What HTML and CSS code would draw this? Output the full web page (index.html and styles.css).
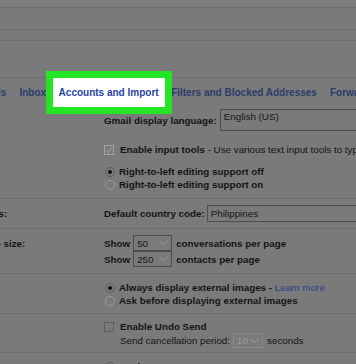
FILE: index.html
```html
<!DOCTYPE html>
<html lang="en">
<head>
    <meta charset="UTF-8">
    <meta name="viewport" content="width=device-width, initial-scale=1.0">
    <title>Gmail - Settings</title>
    <link rel="stylesheet" href="styles.css">
</head>
<body>
    <div class="masthead">
        <div class="band band-a"></div>
        <div class="band band-b"></div>
        <div class="band band-c"></div>
        <div class="band band-d"></div>
    </div>

    <nav class="tabs">
        <span class="tab">General</span>
        <span class="tab">Labels</span>
        <span class="tab">Inbox</span>
        <span class="tab tab-active">Accounts and Import</span>
        <span class="tab">Filters and Blocked Addresses</span>
        <span class="tab">Forwarding and POP/IMAP</span>
    </nav>

    <div class="settings">
        <!-- Language -->
        <div class="row row-language">
            <div class="label">Language:</div>
            <div class="value">
                <div class="line line-lang">
                    Gmail display language:
                    <span class="select select-lang plain">English (US)</span>
                </div>
                <div class="line line-input">
                    <span class="check check-on">
                        <svg width="8" height="8" viewBox="0 0 8 8"><polyline points="1,4 3,6.5 7,1" /></svg>
                    </span>
                    Enable input tools&nbsp;<span class="plain">- Use various text input tools to type in the language of your choice</span>
                </div>
                <div class="options">
                    <div class="line"><span class="radio radio-on"></span>Right-to-left editing support off</div>
                    <div class="line"><span class="radio"></span>Right-to-left editing support on</div>
                </div>
            </div>
        </div>

        <!-- Phone numbers -->
        <div class="row row-phone">
            <div class="label">Phone numbers:</div>
            <div class="value">
                <div class="line line-country">
                    Default country code:
                    <span class="select select-country plain">Philippines</span>
                </div>
            </div>
        </div>

        <!-- Page size -->
        <div class="row row-size">
            <div class="label">Maximum page size:</div>
            <div class="value">
                <div class="line line-show">
                    Show
                    <span class="select select-small plain">50
                        <svg class="chevron" width="9" height="6" viewBox="0 0 9 6"><polyline points="0.5,0.5 4.5,5 8.5,0.5" /></svg>
                    </span>
                    conversations per page
                </div>
                <div class="line line-show">
                    Show
                    <span class="select select-small plain">250
                        <svg class="chevron" width="9" height="6" viewBox="0 0 9 6"><polyline points="0.5,0.5 4.5,5 8.5,0.5" /></svg>
                    </span>
                    contacts per page
                </div>
            </div>
        </div>

        <!-- Images -->
        <div class="row row-images">
            <div class="label">Images:</div>
            <div class="value">
                <div class="line"><span class="radio radio-on"></span>Always display external images -&nbsp;<a class="link plain" href="#">Learn more</a></div>
                <div class="line"><span class="radio"></span>Ask before displaying external images</div>
            </div>
        </div>

        <!-- Undo send -->
        <div class="row row-undo">
            <div class="label">Undo Send:</div>
            <div class="value">
                <div class="line"><span class="check"></span>Enable Undo Send</div>
                <div class="line line-period plain">
                    Send cancellation period:
                    <span class="select select-off">10
                        <svg class="chevron" width="9" height="6" viewBox="0 0 9 6"><polyline points="0.5,0.5 4.5,5 8.5,0.5" /></svg>
                    </span>
                    seconds
                </div>
            </div>
        </div>

        <!-- Reply behaviour -->
        <div class="row row-reply">
            <div class="label">Default reply behavior:</div>
            <div class="value">
                <div class="line"><span class="radio radio-on"></span>Reply</div>
            </div>
        </div>
    </div>
</body>
</html>
```

FILE: styles.css
```css
* {
    margin: 0;
    padding: 0;
    box-sizing: border-box;
}

html,
body {
    width: 356px;
    height: 364px;
    overflow: hidden;
}

body {
    background-color: #7a7a7a;
    color: #141414;
    font-family: 'Liberation Sans', Arial, Helvetica, sans-serif;
    font-size: 9.8px;
    font-weight: bold;
    line-height: 13px;
    white-space: nowrap;
}

.plain {
    font-weight: normal;
}

/* Header strips above the tabs */
.band {
    border-bottom: 1px solid #6d6d6d;
}

.band-a {
    height: 8px;
    background-color: #7d7d7d;
}

.band-b {
    height: 22px;
}

.band-c {
    height: 11px;
    background-color: #787878;
}

.band-d {
    height: 37px;
}

/* Tabs */
.tabs {
    display: flex;
    align-items: flex-start;
    height: 27px;
    padding-top: 9px;
    margin-left: -82px;
    font-size: 10px;
    line-height: 12px;
    color: #2c3c6c;
}

.tab {
    flex: none;
    padding: 0 6.5px;
}

.tab-active {
    position: relative;
    z-index: 1;
    margin: -16px -7px 0;
    padding: 9px 6px 8px;
    background-color: #ffffff;
    border: 7px solid #25e425;
    color: #1f44a6;
}

/* Settings rows */
.settings {
    margin-left: -70px;
}

.row {
    display: flex;
    align-items: baseline;
    border-bottom: 1px solid #6e6e6e;
}

.label {
    flex: none;
    width: 174px;
}

.value {
    flex: none;
}

.line {
    display: flex;
    align-items: center;
    height: 13px;
}

.row-language {
    padding: 4px 0 7px;
}

.line-lang {
    height: 22px;
}

.line-input {
    margin-top: 12px;
}

.options {
    margin-top: 9px;
}

.row-phone {
    padding: 6px 0;
}

.line-country {
    height: 17px;
}

.row-size {
    padding: 6px 0;
}

.line-show {
    height: 16px;
}

.row-images {
    padding: 7px 0 6px;
}

.row-undo {
    padding: 6px 0 4px;
}

.line-period {
    height: 15px;
    padding-left: 16px;
}

.row-reply {
    padding-top: 7px;
    border-bottom: none;
}

/* Selects */
.select {
    display: inline-flex;
    align-items: center;
    margin-left: 3px;
    padding: 0 3px;
    border: 1px solid #4e4e4e;
    color: #161616;
}

.select-lang {
    align-items: flex-start;
    width: 200px;
    height: 22px;
}

.select-country {
    width: 200px;
    height: 17px;
    margin-left: 2px;
}

.select-small {
    justify-content: space-between;
    width: 39px;
    height: 16px;
    margin-right: 4px;
}

.select-off {
    justify-content: space-between;
    width: 30px;
    height: 15px;
    margin-right: 4px;
    border-color: #8a8a8a;
    color: #9a9a9a;
}

.chevron polyline {
    fill: none;
    stroke: #9c9c9c;
    stroke-width: 1;
}

/* Checkboxes and radios */
.check {
    display: inline-flex;
    align-items: center;
    justify-content: center;
    flex: none;
    width: 10px;
    height: 10px;
    margin-right: 6px;
    border: 1px solid #5e5e5e;
}

.check-on {
    border-color: #a2a2a2;
}

.check-on polyline {
    fill: none;
    stroke: #9a9a9a;
    stroke-width: 1.2;
}

.radio {
    position: relative;
    flex: none;
    width: 10px;
    height: 10px;
    margin: 0 4px 0 1px;
    border: 1px solid #9a9a9a;
    border-radius: 50%;
}

.radio-on {
    border-color: #5c5c5c;
}

.radio-on::after {
    content: "";
    position: absolute;
    top: 2px;
    left: 2px;
    width: 4px;
    height: 4px;
    border-radius: 50%;
    background-color: #0e0e0e;
}

.link {
    color: #2e4184;
    text-decoration: none;
}
```
